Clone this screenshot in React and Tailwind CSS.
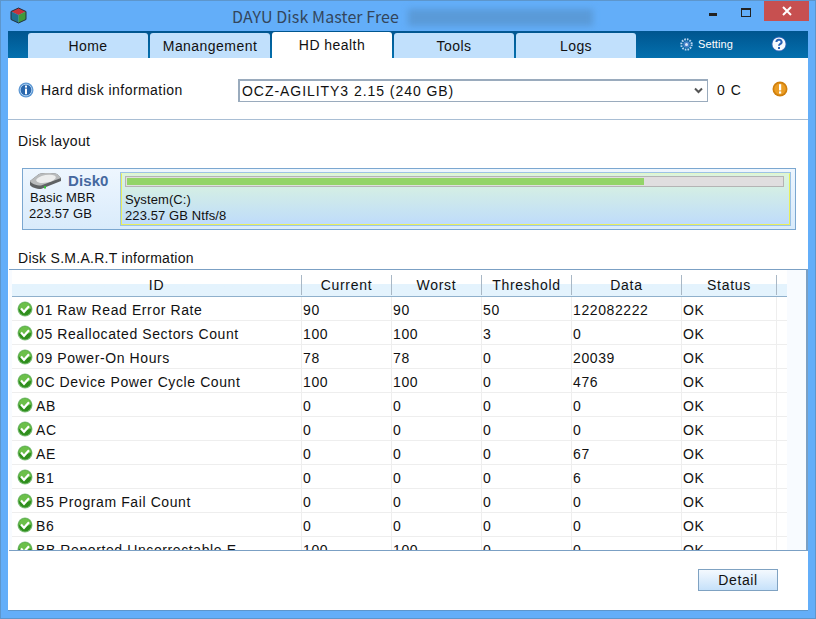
const FONT = { fontFamily: '"Liberation Sans", Arial, sans-serif' };
const TITLE = { fontFamily: '"Noto Sans CJK JP", "Noto Sans", sans-serif' };

function Cube() {
  return (
    <svg width="17" height="17" viewBox="0 0 17 17">
      <polygon points="8.5,1 16,4.5 8.5,8 1,4.5" fill="#c8333a" />
      <polygon points="1,4.5 8.5,8 8.5,16 1,12.5" fill="#1f6f8f" />
      <polygon points="16,4.5 8.5,8 8.5,16 16,12.5" fill="#3f9a3a" />
      <path d="M1 4.5 8.5 1 16 4.5V12.5L8.5 16 1 12.5Z" fill="none" stroke="#24323c" strokeWidth="1" />
    </svg>
  );
}

function Check() {
  return (
    <svg width="16" height="16" viewBox="0 0 16 16" className="shrink-0">
      <circle cx="8" cy="8" r="7.5" fill="#7fbf7a" />
      <circle cx="8" cy="8" r="6.5" fill="#2f8f1c" />
      <path d="M1.8 7.5a6.2 6 0 0 1 12.4 0c-3 1.8-9 1.8-12.4 0Z" fill="#6cc04a" />
      <path d="M4 7.6 7 10.8 12 5.2" fill="none" stroke="#fff" strokeWidth="2.2" />
    </svg>
  );
}

function Info() {
  return (
    <svg width="16" height="16" viewBox="0 0 16 16" className="shrink-0">
      <circle cx="8" cy="8" r="7.5" fill="#5c97d3" />
      <circle cx="8" cy="8" r="5.8" fill="#2a67ad" stroke="#a8cbed" strokeWidth="1" />
      <rect x="7" y="3.6" width="2" height="2" fill="#fff" />
      <rect x="7" y="6.6" width="2" height="5.6" fill="#fff" />
    </svg>
  );
}

function Warn() {
  return (
    <svg width="16" height="16" viewBox="0 0 16 16">
      <circle cx="8" cy="8" r="7.5" fill="#d07f0c" />
      <circle cx="8" cy="8" r="5.8" fill="#eb9d24" />
      <rect x="7" y="3.2" width="2.2" height="6.2" fill="#fff" />
      <rect x="7" y="10.4" width="2.2" height="2.2" fill="#fff" />
    </svg>
  );
}

function Gear() {
  return (
    <svg width="13" height="13" viewBox="0 0 13 13">
      <circle cx="6.5" cy="6.5" r="5.2" fill="none" stroke="#b9d4f2" strokeWidth="2" strokeDasharray="1.6 1.1" />
      <circle cx="6.5" cy="6.5" r="3.2" fill="#4a82c8" />
      <circle cx="6.5" cy="6.5" r="1.5" fill="#dbe9f9" />
    </svg>
  );
}

function Help() {
  return (
    <svg width="16" height="16" viewBox="0 0 16 16">
      <circle cx="8" cy="8" r="7.5" fill="#2f66b8" />
      <circle cx="8" cy="8" r="6.6" fill="#f7fafd" />
      <path d="M5.4 6a2.6 2.2 0 1 1 3.7 2c-.8.5-1.1.9-1.1 1.8" fill="none" stroke="#2b62b5" strokeWidth="2" />
      <rect x="7" y="11" width="2" height="2" fill="#2b62b5" />
    </svg>
  );
}

function DiskIcon() {
  return (
    <svg width="32" height="18" viewBox="0 0 32 18" className="shrink-0">
      <path d="M1 9 10 2C15 0.5 24 1 28 2L32 6V9L12 17C7 17 2 15 1 13Z" fill="#5f6264" />
      <path d="M1 9 10 2C15 0.5 24 1 28 2L32 6 12 13.5C7 13.5 2 11.5 1 9Z" fill="#b9bbbc" />
      <ellipse cx="17" cy="6.8" rx="10" ry="3.8" fill="#eceded" transform="rotate(-10 17 6.8)" />
      <rect x="15" y="14" width="2" height="2.5" fill="#37c23a" />
    </svg>
  );
}

function Tab({ label, active }) {
  return (
    <div
      className={`w-[120px] rounded-t-[3px] flex items-center justify-center text-[14px] tracking-[0.45px] text-[#111] ${
        active ? "bg-white h-[26px]" : "bg-[#c1e0fc] h-[25px]"
      }`}
    >
      {label}
    </div>
  );
}

const COLS = ["w-[290px]", "w-[90px]", "w-[90px]", "w-[90px]", "w-[110px]", "w-[95px]"];
const HEAD = ["ID", "Current", "Worst", "Threshold", "Data", "Status"];
const ROWS = [
  ["01 Raw Read Error Rate", "90", "90", "50", "122082222", "OK"],
  ["05 Reallocated Sectors Count", "100", "100", "3", "0", "OK"],
  ["09 Power-On Hours", "78", "78", "0", "20039", "OK"],
  ["0C Device Power Cycle Count", "100", "100", "0", "476", "OK"],
  ["AB", "0", "0", "0", "0", "OK"],
  ["AC", "0", "0", "0", "0", "OK"],
  ["AE", "0", "0", "0", "67", "OK"],
  ["B1", "0", "0", "0", "6", "OK"],
  ["B5 Program Fail Count", "0", "0", "0", "0", "OK"],
  ["B6", "0", "0", "0", "0", "OK"],
  ["BB Reported Uncorrectable E", "100", "100", "0", "0", "OK"],
];

export default function App() {
  return (
    <div
      style={FONT}
      className="w-[816px] h-[619px] bg-[#63aef9] border border-[#5d96cc] flex flex-col overflow-hidden text-[14px] text-[#111] leading-none"
    >
      {/* title bar */}
      <div className="h-[30px] shrink-0 flex items-start">
        <div className="w-[9px] shrink-0" />
        <div className="pt-[6px]"><Cube /></div>
        <div style={TITLE} className="ml-[205px] mt-[7px] text-[16px] text-[#33465c] tracking-[0.1px] w-[172px] whitespace-nowrap">
          DAYU Disk Master Free
        </div>
        <div className="ml-[4px] mt-[8px] w-[185px] h-[17px] bg-[#5a9ad8] blur-[3px]" />
        <div className="ml-auto flex items-start">
          <div className="w-[37px] h-[21px] flex items-center justify-center">
            <div className="w-[8px] h-[3px] bg-[#222] mt-[6px]" />
          </div>
          <div className="w-[30px] h-[21px] flex items-center justify-center">
            <div className="w-[10px] h-[9px] mt-[1px] border border-[#222] border-t-2" />
          </div>
          <div className="ml-[3px] mr-[6px] w-[45px] h-[20px] bg-[#c75050] flex items-center justify-center">
            <svg width="10" height="10" viewBox="0 0 10 10">
              <path d="M1 1 9 9M9 1 1 9" stroke="#fff" strokeWidth="2" />
            </svg>
          </div>
        </div>
      </div>

      {/* main panel */}
      <div className="mx-[7px] flex-1 flex flex-col min-h-0">
        {/* tabs */}
        <div className="h-[27px] shrink-0 bg-gradient-to-b from-[#00558f] to-[#0470ae] flex items-end pl-[20px] gap-[2px]">
          <Tab label="Home" />
          <Tab label="Manangement" />
          <Tab label="HD health" active />
          <Tab label="Tools" />
          <Tab label="Logs" />
          <div className="flex-1 h-full flex items-center">
            <div className="ml-[42px] flex items-center gap-[5px] text-white text-[11px] tracking-[0.1px]">
              <Gear />
              <span>Setting</span>
            </div>
            <div className="ml-[38px] -mt-[1px]"><Help /></div>
          </div>
        </div>

        <div className="flex-1 min-h-0 bg-white border-b border-[#5d96cc] flex flex-col">
          {/* disk info row */}
          <div className="h-[62px] shrink-0 border-b border-[#a9bed4] flex items-center">
            <div className="ml-[10px] mt-[3px]"><Info /></div>
            <span className="ml-[7px] w-[197px] tracking-[0.45px] whitespace-nowrap mt-[3px]">Hard disk information</span>
            <div className="w-[470px] h-[23px] mt-[3px] border border-[#9aabbd] border-t-2 border-l-2 flex items-center justify-between pl-[2px] pr-[4px] tracking-[0.95px]">
              <span>OCZ-AGILITY3 2.15 (240 GB)</span>
              <svg width="9" height="7" viewBox="0 0 9 7"><path d="M1 1.5 4.5 5 8 1.5" fill="none" stroke="#555" strokeWidth="2" /></svg>
            </div>
            <span className="ml-[9px] w-[55px] tracking-[1px] mt-[3px]">0 C</span>
            <div className="mt-[1px]"><Warn /></div>
          </div>

          {/* disk layout */}
          <div className="pl-[10px] pt-[14px] h-[22px] box-content shrink-0 tracking-[0.35px]">Disk layout</div>
          <div className="mt-[12px] ml-[14px] mr-[12px] h-[62px] shrink-0 border border-[#7ba7d0] bg-gradient-to-b from-[#eef6fe] to-[#d9ebfb] flex p-[3px] pr-[4px]">
            <div className="w-[94px] shrink-0 pl-[3px] text-[13px] tracking-[0.1px]">
              <div className="flex items-center gap-[7px] h-[17px]">
                <DiskIcon />
                <span className="text-[#45689f] font-bold text-[15px]">Disk0</span>
              </div>
              <div className="mt-[2px] ml-[1px]">Basic MBR</div>
              <div className="mt-[3px]">223.57 GB</div>
            </div>
            <div className="flex-1 border border-[#9cc3e6]">
              <div className="h-full border border-[#e8ee5c] border-t-[#e3f6c8] bg-gradient-to-b from-[#dcf5dc] to-[#bfdcfa] pl-[3px] pr-[5px] pt-[2px] text-[13px] tracking-[0.1px]">
                <div className="h-[11px] border border-[#b4b4b4] bg-[#e0dedf] p-[1px]">
                  <div className="h-full w-[79%] bg-[#93d468]" />
                </div>
                <div className="mt-[6px]">System(C:)</div>
                <div className="mt-[3px]">223.57 GB Ntfs/8</div>
              </div>
            </div>
          </div>

          <div className="pl-[10px] mt-[21px] h-[18px] shrink-0 tracking-[0.28px]">Disk S.M.A.R.T information</div>

          {/* table */}
          <div className="h-[282px] shrink-0 ml-[1px] border-t border-b border-[#7ba0c4] border-r-2 border-r-[#7ba0c4] bg-[#f8fbff] overflow-hidden">
            <div className="ml-[3px] w-[775px] h-full">
              <div className="h-[27px] border-b border-[#8fb0cc] bg-gradient-to-b from-white from-52% to-[#e4f3fd] to-52% flex pt-[5px] tracking-[0.7px]">
                {HEAD.map((h, i) => (
                  <div key={h} className={`${COLS[i]} h-[20px] border-r border-[#a9b8c6] flex items-center justify-center`}>
                    {h}
                  </div>
                ))}
              </div>
              {ROWS.map((r, ri) => (
                <div key={ri} className="h-[24px] bg-white border-b border-[#eeeeee] flex items-center">
                  {r.map((c, i) => (
                    <div
                      key={i}
                      className={`${COLS[i]} h-full border-r border-[#eeeeee] flex items-center gap-[3px] whitespace-nowrap tracking-[0.6px] ${i === 0 ? "pl-[5px]" : "pl-[1px]"}`}
                    >
                      {i === 0 && <Check />}
                      <span className="mt-[2px]">{c}</span>
                    </div>
                  ))}
                </div>
              ))}
            </div>
          </div>

          {/* footer */}
          <div className="flex-1 flex items-start justify-end pr-[30px] pt-[18px]">
            <div className="w-[80px] h-[22px] border border-[#7fa2c2] bg-gradient-to-b from-[#f4f9fe] to-[#c6e1fa] flex items-center justify-center tracking-[0.6px]">
              Detail
            </div>
          </div>
        </div>
        <div className="h-[7px] shrink-0" />
      </div>
    </div>
  );
}
